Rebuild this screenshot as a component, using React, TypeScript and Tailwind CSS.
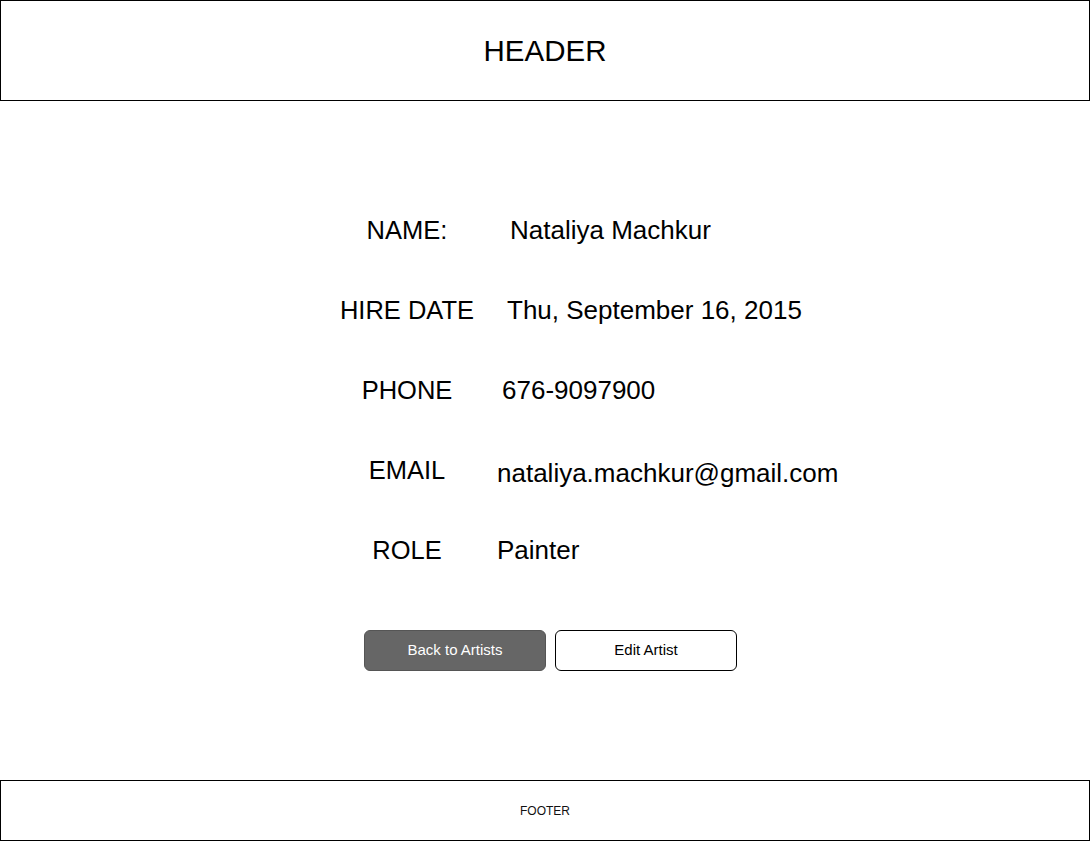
const rows = [
  { label: 'NAME:', value: 'Nataliya Machkur', offset: 'ml-[23px]' },
  { label: 'HIRE DATE', value: 'Thu, September 16, 2015', offset: 'ml-[20px]' },
  { label: 'PHONE', value: '676-9097900', offset: 'ml-[15px]' },
  { label: 'EMAIL', value: 'nataliya.machkur@gmail.com', offset: 'ml-[10px] mt-[6px]' },
  { label: 'ROLE', value: 'Painter', offset: 'ml-[10px]' },
];

export default function App() {
  return (
    <div className="w-[1091px] h-[841px] bg-white text-black font-['Liberation_Sans',Arial,sans-serif] flex flex-col">
      {/* header */}
      <header className="w-[1090px] h-[101px] border border-black flex items-center justify-center">
        <h1 className="text-[29.5px] leading-none">HEADER</h1>
      </header>

      {/* artist details */}
      <main className="flex flex-col items-start pl-[327px] pt-[89px]">
        {rows.map((row) => (
          <div key={row.label} className="flex h-[80px] items-center">
            <span className="w-[160px] text-center text-[25.5px]">{row.label}</span>
            <span className={`${row.offset} text-[26px]`}>{row.value}</span>
          </div>
        ))}

        <div className="flex gap-[9px] ml-[37px] mt-[40px]">
          <button
            type="button"
            className="w-[182px] h-[41px] rounded-[6px] bg-[#666666] border border-[#555555] text-white text-[15px]"
          >
            Back to Artists
          </button>
          <button
            type="button"
            className="w-[182px] h-[41px] rounded-[6px] bg-white border border-black text-black text-[15px]"
          >
            Edit Artist
          </button>
        </div>
      </main>

      {/* footer */}
      <footer className="w-[1090px] h-[61px] mt-auto border border-black flex items-center justify-center">
        <span className="text-[12px] text-[#111111]">FOOTER</span>
      </footer>
    </div>
  );
}
